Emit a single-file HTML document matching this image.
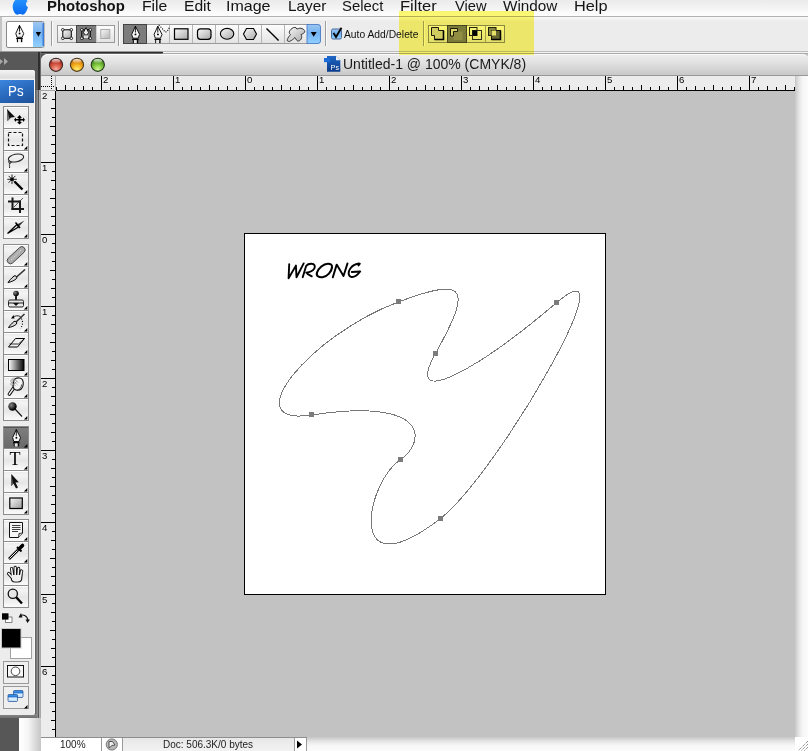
<!DOCTYPE html>
<html><head><meta charset="utf-8"><style>
*{margin:0;padding:0;box-sizing:border-box}
html,body{width:808px;height:751px;overflow:hidden;background:#575757;font-family:"Liberation Sans",sans-serif}
body{position:relative}
.a{position:absolute}
svg{position:absolute;overflow:visible}
.mi{position:absolute;top:-1px;font-size:14.5px;color:#141414;white-space:nowrap;line-height:14px;transform-origin:0 0}
.sep{position:absolute;width:1px;background:#a4a4a4;border-right:1px solid #fafafa;width:2px}
.grp{position:absolute;border:1px solid #9d9d9d;background:#f2f2f2;display:flex}
.b{position:relative;height:100%;border-right:1px solid #b4b4b4;background:linear-gradient(#fdfdfd,#ececec 60%,#e4e4e4)}
.b:last-child{border-right:none}
.b.on{background:linear-gradient(#7a7a7a,#6c6c6c);}
.rn{position:absolute;font-size:9.6px;line-height:9px;color:#000}
.tb{position:absolute;left:3px;width:26px;height:23px;border:1px solid #9b9b9b;background:linear-gradient(#fafafa,#ececec 55%,#e6e6e6)}
.tb.on{background:linear-gradient(#7c7c7c,#6e6e6e)}
.tri{position:absolute;right:1px;bottom:1px;width:0;height:0;border-left:4px solid transparent;border-bottom:4px solid #000}

</style></head><body>
<div class="a" style="left:0;top:0;width:808px;height:16px;background:linear-gradient(#ebebeb,#f2f2f2 45%,#fbfbfb 80%,#fdfdfd)"></div>
<div class="a" style="left:0;top:16px;width:808px;height:1px;background:#b2b2b2"></div>
<svg style="left:12px;top:0" width="17" height="16" viewBox="0 0 17 16"><defs><linearGradient id="ap" x1="0" y1="0" x2="0" y2="1"><stop offset="0" stop-color="#2394ff"/><stop offset="1" stop-color="#0a6af0"/></linearGradient></defs><path d="M8.2,0.2 C9.5,-0.6 11,-1.2 12.6,-0.9 C14.2,-0.6 15,0.3 15.6,1.3 C13.3,2.6 13.6,6.2 15.9,7 C15.5,8.8 14.8,10.8 13.6,12.5 C12.6,13.9 11.8,14.8 10.6,14.7 C9.6,14.6 9.1,14 8,14 C6.9,14 6.3,14.6 5.4,14.7 C4.2,14.8 3.3,13.7 2.4,12.4 C0.7,9.8 0.4,6.6 1,4.2 C1.7,1.4 3.6,-0.8 5.6,-0.9 C6.7,-0.9 7.4,-0.3 8.2,0.2 Z" fill="url(#ap)"/></svg>
<div class="mi" style="left:47px;font-weight:bold;transform:scaleX(1.027)">Photoshop</div>
<div class="mi" style="left:142px;transform:scaleX(1.086)">File</div>
<div class="mi" style="left:184px;transform:scaleX(1.078)">Edit</div>
<div class="mi" style="left:226px;transform:scaleX(1.105)">Image</div>
<div class="mi" style="left:288px;transform:scaleX(1.056)">Layer</div>
<div class="mi" style="left:342px;transform:scaleX(1.026)">Select</div>
<div class="mi" style="left:400px;transform:scaleX(1.143)">Filter</div>
<div class="mi" style="left:455px;transform:scaleX(1.013)">View</div>
<div class="mi" style="left:503px;transform:scaleX(1.054)">Window</div>
<div class="mi" style="left:574px;transform:scaleX(1.126)">Help</div>
<div class="a" style="left:0;top:17px;width:808px;height:35px;background:linear-gradient(#fafafa,#ececec 12%,#ececec)"></div>
<div class="a" style="left:0;top:17px;width:2px;height:35px;background:#c4c4c4"></div>
<div class="a" style="left:162px;top:51px;width:646px;height:3px;background:linear-gradient(#bdbdbd 0,#bdbdbd 33%,#f4f4f4 33%,#f4f4f4 66%,#a9a9a9 66%)"></div>
<div class="a" style="left:0;top:51px;width:163px;height:3px;background:linear-gradient(#9a9a9a 0,#9a9a9a 33%,#2c2c2c 33%,#2c2c2c 66%,#686868 66%);border-radius:0 2px 2px 0"></div>
<svg style="left:0;top:0" width="808" height="60">
<defs>
<linearGradient id="bl" x1="0" y1="0" x2="0" y2="1"><stop offset="0" stop-color="#9cc6f0"/><stop offset="0.45" stop-color="#74b2f2"/><stop offset="1" stop-color="#8fd0ff"/></linearGradient>
<linearGradient id="bt" x1="0" y1="0" x2="0" y2="1"><stop offset="0" stop-color="#fdfdfd"/><stop offset="0.6" stop-color="#ededed"/><stop offset="1" stop-color="#e2e2e2"/></linearGradient>
<linearGradient id="sq" x1="0" y1="0" x2="1" y2="1"><stop offset="0" stop-color="#fafafa"/><stop offset="1" stop-color="#a8a8a8"/></linearGradient>
<g id="pen"><path d="M0,0 L-3.7,8.2 L-2.5,12 H2.7 L4.2,8.2 Z" fill="#f6f6f6" stroke="#000" stroke-width="0.9" stroke-linejoin="miter"/><path d="M0,0 V6.3" stroke="#000" stroke-width="0.9"/><circle cx="0.1" cy="8.2" r="0.95" fill="#000"/><rect x="-3.3" y="12.6" width="6.6" height="1.3" fill="#000"/><rect x="-2.6" y="13.9" width="1.1" height="3" fill="#000"/><rect x="1.3" y="13.9" width="1.5" height="3" fill="#000"/><rect x="-1.5" y="13.9" width="2.8" height="3" fill="#e8e8e8"/></g>
</defs>
<!-- preset picker -->
<rect x="6.5" y="21.5" width="37.5" height="26" rx="1.5" fill="#fff" stroke="#8a8a8a"/>
<path d="M33,22 H41.5 Q44,22 44,24.5 V44.5 Q44,47 41.5,47 H33 Z" fill="url(#bl)"/>
<path d="M43.2,23 V46" stroke="#2a6ad0" stroke-width="1.2"/>
<path d="M35.8,32 H41 L38.4,36.8 Z" fill="#000"/>
<use href="#pen" x="19.5" y="25.3"/>
<!-- separators -->
<g shape-rendering="crispEdges">
<rect x="51" y="21" width="1" height="25" fill="#9d9d9d"/><rect x="52" y="21" width="1" height="25" fill="#fbfbfb"/>
<rect x="118" y="21" width="1" height="25" fill="#9d9d9d"/><rect x="119" y="21" width="1" height="25" fill="#fbfbfb"/>
<rect x="325" y="21" width="1" height="25" fill="#9d9d9d"/><rect x="326" y="21" width="1" height="25" fill="#fbfbfb"/>
<rect x="423" y="21" width="1" height="25" fill="#9d9d9d"/><rect x="424" y="21" width="1" height="25" fill="#fbfbfb"/>
</g>
<!-- group1 -->
<rect x="57.5" y="25.5" width="57" height="17" fill="url(#bt)" stroke="#9a9a9a"/>
<rect x="76.5" y="25.5" width="19" height="17" fill="#7c7c7c" stroke="#444"/>
<path d="M96,26 V42" stroke="#b0b0b0"/>
<rect x="62.8" y="29.8" width="8.5" height="8.5" fill="url(#sq)" stroke="#000" stroke-width="1"/>
<g fill="#fff" stroke="#000" stroke-width="0.8"><circle cx="62.8" cy="29.8" r="1.3"/><circle cx="71.3" cy="29.8" r="1.3"/><circle cx="62.8" cy="38.3" r="1.3"/><circle cx="71.3" cy="38.3" r="1.3"/></g>
<rect x="81.8" y="29.8" width="8.5" height="8.5" fill="none" stroke="#000" stroke-width="1"/>
<path d="M86,27.5 L83.5,32.5 L85,35 H87 L88.5,32.5 Z" fill="#eee" stroke="#000" stroke-width="0.8"/>
<rect x="84" y="35.5" width="4" height="3" fill="#ddd"/>
<g fill="#fff" stroke="#000" stroke-width="0.8"><circle cx="81.8" cy="29.8" r="1.3"/><circle cx="90.3" cy="29.8" r="1.3"/><circle cx="81.8" cy="38.3" r="1.3"/><circle cx="90.3" cy="38.3" r="1.3"/></g>
<rect x="100.8" y="29.5" width="9" height="9" fill="url(#sq)" stroke="#9a9a9a" stroke-width="1" opacity="0.8"/>
<!-- group2 -->
<rect x="123.5" y="24.5" width="184" height="19" fill="url(#bt)" stroke="#9a9a9a"/>
<rect x="123.5" y="24.5" width="23" height="19" fill="#7c7c7c" stroke="#444"/>
<g stroke="#b4b4b4" shape-rendering="crispEdges"><path d="M169.5,25 V43 M192.5,25 V43 M215.5,25 V43 M238.5,25 V43 M261.5,25 V43 M284.5,25 V43"/></g>
<use href="#pen" x="135.4" y="26.2"/>
<use href="#pen" x="157.8" y="26.2"/>
<g fill="#000"><rect x="158.6" y="24.8" width="1.1" height="1.1"/><rect x="160.4" y="26.6" width="1.1" height="1.1"/><rect x="162.0" y="28.4" width="1.1" height="1.1"/><rect x="163.6" y="30.2" width="1.1" height="1.1"/><rect x="165.4" y="31.3" width="1.1" height="1.1"/><rect x="167.2" y="29.8" width="1.1" height="1.1"/><rect x="168.4" y="27.8" width="1.1" height="1.1"/></g>
<rect x="174.5" y="28.8" width="13.5" height="10.5" fill="url(#sq)" stroke="#000" stroke-width="1.2"/>
<rect x="197.5" y="28.8" width="13.5" height="10.5" rx="3" fill="url(#sq)" stroke="#000" stroke-width="1.2"/>
<ellipse cx="227.1" cy="33.8" rx="6.7" ry="5.4" fill="url(#sq)" stroke="#000" stroke-width="1.1"/>
<path d="M246.5,28.5 H253.5 L256.5,34 L253.5,39.5 H246.5 L243.5,34 Z" fill="url(#sq)" stroke="#000" stroke-width="1.1"/>
<path d="M266.5,28.5 L278.6,40.5" stroke="#000" stroke-width="1.4"/>
<path d="M292,28.5 C293.5,26.8 296.5,27 297,29.2 C299,27.5 303,28 304.5,30.5 C305.5,32.5 303,34 301,34.5 C302.5,36.5 301.5,40.5 298.5,41 C296.5,41.3 296,39 295,37.5 C293,39.5 289.5,42.5 287.5,41 C286.5,39.5 289,36.5 290.5,34.5 C288.5,33.5 289,30.5 292,28.5 Z" fill="url(#sq)" stroke="#333" stroke-width="1"/>
<path d="M307,24.5 H318 Q320.5,24.5 320.5,27 V41 Q320.5,43.5 318,43.5 H307 Z" fill="url(#bl)" stroke="#3a70c0" stroke-width="0.8"/>
<path d="M310.8,32 H316.6 L313.7,36.8 Z" fill="#000"/>
<!-- checkbox -->
<rect x="331.5" y="29" width="10" height="10" rx="1.5" fill="url(#bl)" stroke="#4a6c9c"/>
<path d="M333.5,33 L336,37 L341.5,27.8" fill="none" stroke="#000" stroke-width="1.8"/>
<!-- group3 -->
<rect x="428.5" y="25.5" width="76" height="17" fill="url(#bt)" stroke="#8a8a8a"/>
<rect x="447.5" y="25.5" width="19" height="17" fill="#7c7c7c" stroke="#444"/>
<path d="M485.5,26 V42" stroke="#a0a0a0"/>
<path d="M431.5,27.5 H438.5 V30.5 H443.5 V39.5 H434.5 V35.5 H431.5 Z" fill="#d0d0d0" stroke="#1a1a1a" stroke-width="1"/>
<path d="M434.5,39.5 H443.5 V30.5" fill="none" stroke="#000" stroke-width="1.6"/>
<rect x="453.5" y="31.5" width="9" height="8.5" fill="#909090"/>
<path d="M450.5,28.5 H457.5 V31.5 H453.5 V36 H450.5 Z" fill="#dcdcdc" stroke="#1a1a1a" stroke-width="1"/>
<rect x="469.5" y="27.5" width="7.5" height="8" fill="none" stroke="#222"/>
<rect x="472.5" y="30.5" width="9" height="9" fill="none" stroke="#333"/>
<rect x="472.5" y="30.5" width="4.5" height="5" fill="#000"/>
<rect x="488.5" y="27.5" width="7.5" height="8" fill="#8a8a8a" stroke="#222"/>
<rect x="491.5" y="30.5" width="9" height="9" fill="#666" stroke="#111"/>
<rect x="491.5" y="30.5" width="4.5" height="5" fill="#e6e6e6"/>
<path d="M491.5,39.5 H500.5 V30.5" fill="none" stroke="#000" stroke-width="1.5"/>
</svg>
<div class="a" style="left:344px;top:30px;font-size:10px;line-height:10px;color:#111;white-space:nowrap;transform:scaleX(1.03);transform-origin:0 0">Auto Add/Delete</div>
<div class="a" style="left:700px;top:54px;width:108px;height:10px;background:#c8c8c8"></div>
<div class="a" style="left:41px;top:54px;width:768px;height:697px;background:#c2c2c2;border-radius:7px 7px 0 0"></div>
<div class="a" style="left:41px;top:54px;width:768px;height:22px;border-radius:7px 7px 0 0;background:linear-gradient(#eeeeee,#e2e2e2 40%,#c8c8c8);border-bottom:1px solid #999;box-shadow:inset 0 1px 0 #fafafa"></div>
<div class="a" style="left:795px;top:76px;width:13px;height:661px;background:linear-gradient(90deg,#c6c6c6,#e4e4e4 30%,#f6f6f6 60%,#fbfbfb)"></div>
<div class="a" style="left:306px;top:737px;width:489px;height:14px;background:linear-gradient(#c6c6c6,#e4e4e4 30%,#f6f6f6 60%,#fbfbfb)"></div>
<div class="a" style="left:795px;top:737px;width:13px;height:14px;background:#fff"></div>
<div class="a" style="left:0;top:718px;width:41px;height:33px;background:linear-gradient(90deg,#575757 0,#575757 19px,#fff 19px,#f6f6f6 28px,#c8c8c8 40px)"></div>
<svg style="left:0;top:0" width="808" height="80">
<defs>
<radialGradient id="gr" cx="50%" cy="85%" r="75%"><stop offset="0" stop-color="#f8b0a0"/><stop offset="0.5" stop-color="#d85a48"/><stop offset="1" stop-color="#a02010"/></radialGradient>
<radialGradient id="go" cx="50%" cy="85%" r="75%"><stop offset="0" stop-color="#fff070"/><stop offset="0.5" stop-color="#f4b020"/><stop offset="1" stop-color="#c86a00"/></radialGradient>
<radialGradient id="gg" cx="50%" cy="85%" r="75%"><stop offset="0" stop-color="#d0f890"/><stop offset="0.5" stop-color="#80c840"/><stop offset="1" stop-color="#3a8010"/></radialGradient>
<linearGradient id="gl" x1="0" y1="0" x2="0" y2="1"><stop offset="0" stop-color="#fff" stop-opacity="0.85"/><stop offset="1" stop-color="#fff" stop-opacity="0"/></linearGradient>
</defs>
<circle cx="56" cy="64.8" r="6.6" fill="url(#gr)" stroke="#3a2a28" stroke-width="1.1"/>
<circle cx="77" cy="64.8" r="6.6" fill="url(#go)" stroke="#4a3a20" stroke-width="1.1"/>
<circle cx="97.8" cy="64.8" r="6.6" fill="url(#gg)" stroke="#263a20" stroke-width="1.1"/>
<ellipse cx="56" cy="61.3" rx="4.2" ry="2.2" fill="url(#gl)"/>
<ellipse cx="77" cy="61.3" rx="4.2" ry="2.2" fill="url(#gl)"/>
<ellipse cx="97.8" cy="61.3" rx="4.2" ry="2.2" fill="url(#gl)"/>
<!-- ps doc icon -->
<defs><linearGradient id="psg" x1="0" y1="0" x2="0" y2="1"><stop offset="0" stop-color="#1f66c4"/><stop offset="1" stop-color="#0a3a88"/></linearGradient></defs>
<path d="M327,56 H336 L340.3,60.3 V71.8 H327 Z" fill="url(#psg)"/>
<rect x="324" y="58" width="6" height="4.2" fill="#1a6ad8"/>
<path d="M336,56 L340.3,60.3 H336 Z" fill="#eef2f8"/>
<text x="330.6" y="69.6" font-size="7.2" font-family="Liberation Sans" fill="#fff">Ps</text>
</svg>
<div class="a" style="left:343px;top:57px;font-size:14px;line-height:14px;color:#1a1a1a;white-space:nowrap">Untitled-1 @ 100% (CMYK/8)</div>
<div class="a" style="left:41px;top:76px;width:754px;height:15px;background:#ececec"></div>
<div class="a" style="left:41px;top:91px;width:15px;height:646px;background:#ececec"></div>
<svg style="left:0;top:0" width="808" height="751" shape-rendering="crispEdges">
<rect x="56" y="90" width="739" height="1" fill="#000"/>
<rect x="55" y="91" width="1" height="646" fill="#000"/>
<rect x="56" y="87" width="1" height="3" fill="#000"/>
<rect x="65" y="85" width="1" height="5" fill="#000"/>
<rect x="74" y="87" width="1" height="3" fill="#000"/>
<rect x="83" y="86" width="1" height="4" fill="#000"/>
<rect x="92" y="87" width="1" height="3" fill="#000"/>
<rect x="101" y="76" width="1" height="14" fill="#000"/>
<rect x="110" y="87" width="1" height="3" fill="#000"/>
<rect x="119" y="86" width="1" height="4" fill="#000"/>
<rect x="128" y="87" width="1" height="3" fill="#000"/>
<rect x="137" y="85" width="1" height="5" fill="#000"/>
<rect x="146" y="87" width="1" height="3" fill="#000"/>
<rect x="155" y="86" width="1" height="4" fill="#000"/>
<rect x="164" y="87" width="1" height="3" fill="#000"/>
<rect x="173" y="76" width="1" height="14" fill="#000"/>
<rect x="182" y="87" width="1" height="3" fill="#000"/>
<rect x="191" y="86" width="1" height="4" fill="#000"/>
<rect x="200" y="87" width="1" height="3" fill="#000"/>
<rect x="209" y="85" width="1" height="5" fill="#000"/>
<rect x="218" y="87" width="1" height="3" fill="#000"/>
<rect x="227" y="86" width="1" height="4" fill="#000"/>
<rect x="236" y="87" width="1" height="3" fill="#000"/>
<rect x="245" y="76" width="1" height="14" fill="#000"/>
<rect x="254" y="87" width="1" height="3" fill="#000"/>
<rect x="263" y="86" width="1" height="4" fill="#000"/>
<rect x="272" y="87" width="1" height="3" fill="#000"/>
<rect x="281" y="85" width="1" height="5" fill="#000"/>
<rect x="290" y="87" width="1" height="3" fill="#000"/>
<rect x="299" y="86" width="1" height="4" fill="#000"/>
<rect x="308" y="87" width="1" height="3" fill="#000"/>
<rect x="317" y="76" width="1" height="14" fill="#000"/>
<rect x="326" y="87" width="1" height="3" fill="#000"/>
<rect x="335" y="86" width="1" height="4" fill="#000"/>
<rect x="344" y="87" width="1" height="3" fill="#000"/>
<rect x="353" y="85" width="1" height="5" fill="#000"/>
<rect x="362" y="87" width="1" height="3" fill="#000"/>
<rect x="371" y="86" width="1" height="4" fill="#000"/>
<rect x="380" y="87" width="1" height="3" fill="#000"/>
<rect x="389" y="76" width="1" height="14" fill="#000"/>
<rect x="398" y="87" width="1" height="3" fill="#000"/>
<rect x="407" y="86" width="1" height="4" fill="#000"/>
<rect x="416" y="87" width="1" height="3" fill="#000"/>
<rect x="425" y="85" width="1" height="5" fill="#000"/>
<rect x="434" y="87" width="1" height="3" fill="#000"/>
<rect x="443" y="86" width="1" height="4" fill="#000"/>
<rect x="452" y="87" width="1" height="3" fill="#000"/>
<rect x="461" y="76" width="1" height="14" fill="#000"/>
<rect x="470" y="87" width="1" height="3" fill="#000"/>
<rect x="479" y="86" width="1" height="4" fill="#000"/>
<rect x="488" y="87" width="1" height="3" fill="#000"/>
<rect x="497" y="85" width="1" height="5" fill="#000"/>
<rect x="506" y="87" width="1" height="3" fill="#000"/>
<rect x="515" y="86" width="1" height="4" fill="#000"/>
<rect x="524" y="87" width="1" height="3" fill="#000"/>
<rect x="533" y="76" width="1" height="14" fill="#000"/>
<rect x="542" y="87" width="1" height="3" fill="#000"/>
<rect x="551" y="86" width="1" height="4" fill="#000"/>
<rect x="560" y="87" width="1" height="3" fill="#000"/>
<rect x="569" y="85" width="1" height="5" fill="#000"/>
<rect x="578" y="87" width="1" height="3" fill="#000"/>
<rect x="587" y="86" width="1" height="4" fill="#000"/>
<rect x="596" y="87" width="1" height="3" fill="#000"/>
<rect x="605" y="76" width="1" height="14" fill="#000"/>
<rect x="614" y="87" width="1" height="3" fill="#000"/>
<rect x="623" y="86" width="1" height="4" fill="#000"/>
<rect x="632" y="87" width="1" height="3" fill="#000"/>
<rect x="641" y="85" width="1" height="5" fill="#000"/>
<rect x="650" y="87" width="1" height="3" fill="#000"/>
<rect x="659" y="86" width="1" height="4" fill="#000"/>
<rect x="668" y="87" width="1" height="3" fill="#000"/>
<rect x="677" y="76" width="1" height="14" fill="#000"/>
<rect x="686" y="87" width="1" height="3" fill="#000"/>
<rect x="695" y="86" width="1" height="4" fill="#000"/>
<rect x="704" y="87" width="1" height="3" fill="#000"/>
<rect x="713" y="85" width="1" height="5" fill="#000"/>
<rect x="722" y="87" width="1" height="3" fill="#000"/>
<rect x="731" y="86" width="1" height="4" fill="#000"/>
<rect x="740" y="87" width="1" height="3" fill="#000"/>
<rect x="749" y="76" width="1" height="14" fill="#000"/>
<rect x="758" y="87" width="1" height="3" fill="#000"/>
<rect x="767" y="86" width="1" height="4" fill="#000"/>
<rect x="776" y="87" width="1" height="3" fill="#000"/>
<rect x="785" y="85" width="1" height="5" fill="#000"/>
<rect x="794" y="87" width="1" height="3" fill="#000"/>
<rect x="52" y="99" width="3" height="1" fill="#000"/>
<rect x="51" y="108" width="4" height="1" fill="#000"/>
<rect x="52" y="117" width="3" height="1" fill="#000"/>
<rect x="50" y="126" width="5" height="1" fill="#000"/>
<rect x="52" y="135" width="3" height="1" fill="#000"/>
<rect x="51" y="144" width="4" height="1" fill="#000"/>
<rect x="52" y="153" width="3" height="1" fill="#000"/>
<rect x="41" y="162" width="14" height="1" fill="#000"/>
<rect x="52" y="171" width="3" height="1" fill="#000"/>
<rect x="51" y="180" width="4" height="1" fill="#000"/>
<rect x="52" y="189" width="3" height="1" fill="#000"/>
<rect x="50" y="198" width="5" height="1" fill="#000"/>
<rect x="52" y="207" width="3" height="1" fill="#000"/>
<rect x="51" y="216" width="4" height="1" fill="#000"/>
<rect x="52" y="225" width="3" height="1" fill="#000"/>
<rect x="41" y="234" width="14" height="1" fill="#000"/>
<rect x="52" y="243" width="3" height="1" fill="#000"/>
<rect x="51" y="252" width="4" height="1" fill="#000"/>
<rect x="52" y="261" width="3" height="1" fill="#000"/>
<rect x="50" y="270" width="5" height="1" fill="#000"/>
<rect x="52" y="279" width="3" height="1" fill="#000"/>
<rect x="51" y="288" width="4" height="1" fill="#000"/>
<rect x="52" y="297" width="3" height="1" fill="#000"/>
<rect x="41" y="306" width="14" height="1" fill="#000"/>
<rect x="52" y="315" width="3" height="1" fill="#000"/>
<rect x="51" y="324" width="4" height="1" fill="#000"/>
<rect x="52" y="333" width="3" height="1" fill="#000"/>
<rect x="50" y="342" width="5" height="1" fill="#000"/>
<rect x="52" y="351" width="3" height="1" fill="#000"/>
<rect x="51" y="360" width="4" height="1" fill="#000"/>
<rect x="52" y="369" width="3" height="1" fill="#000"/>
<rect x="41" y="378" width="14" height="1" fill="#000"/>
<rect x="52" y="387" width="3" height="1" fill="#000"/>
<rect x="51" y="396" width="4" height="1" fill="#000"/>
<rect x="52" y="405" width="3" height="1" fill="#000"/>
<rect x="50" y="414" width="5" height="1" fill="#000"/>
<rect x="52" y="423" width="3" height="1" fill="#000"/>
<rect x="51" y="432" width="4" height="1" fill="#000"/>
<rect x="52" y="441" width="3" height="1" fill="#000"/>
<rect x="41" y="450" width="14" height="1" fill="#000"/>
<rect x="52" y="459" width="3" height="1" fill="#000"/>
<rect x="51" y="468" width="4" height="1" fill="#000"/>
<rect x="52" y="477" width="3" height="1" fill="#000"/>
<rect x="50" y="486" width="5" height="1" fill="#000"/>
<rect x="52" y="495" width="3" height="1" fill="#000"/>
<rect x="51" y="504" width="4" height="1" fill="#000"/>
<rect x="52" y="513" width="3" height="1" fill="#000"/>
<rect x="41" y="522" width="14" height="1" fill="#000"/>
<rect x="52" y="531" width="3" height="1" fill="#000"/>
<rect x="51" y="540" width="4" height="1" fill="#000"/>
<rect x="52" y="549" width="3" height="1" fill="#000"/>
<rect x="50" y="558" width="5" height="1" fill="#000"/>
<rect x="52" y="567" width="3" height="1" fill="#000"/>
<rect x="51" y="576" width="4" height="1" fill="#000"/>
<rect x="52" y="585" width="3" height="1" fill="#000"/>
<rect x="41" y="594" width="14" height="1" fill="#000"/>
<rect x="52" y="603" width="3" height="1" fill="#000"/>
<rect x="51" y="612" width="4" height="1" fill="#000"/>
<rect x="52" y="621" width="3" height="1" fill="#000"/>
<rect x="50" y="630" width="5" height="1" fill="#000"/>
<rect x="52" y="639" width="3" height="1" fill="#000"/>
<rect x="51" y="648" width="4" height="1" fill="#000"/>
<rect x="52" y="657" width="3" height="1" fill="#000"/>
<rect x="41" y="666" width="14" height="1" fill="#000"/>
<rect x="52" y="675" width="3" height="1" fill="#000"/>
<rect x="51" y="684" width="4" height="1" fill="#000"/>
<rect x="52" y="693" width="3" height="1" fill="#000"/>
<rect x="50" y="702" width="5" height="1" fill="#000"/>
<rect x="52" y="711" width="3" height="1" fill="#000"/>
<rect x="51" y="720" width="4" height="1" fill="#000"/>
<rect x="52" y="729" width="3" height="1" fill="#000"/>
<rect x="41" y="90" width="14" height="1" fill="#a4a4a4"/>














<rect x="55" y="76" width="1" height="14" fill="#ababab"/><rect x="51" y="76" width="1" height="1" fill="#000"/><rect x="51" y="78" width="1" height="1" fill="#000"/><rect x="51" y="80" width="1" height="1" fill="#000"/><rect x="51" y="82" width="1" height="1" fill="#000"/><rect x="51" y="84" width="1" height="1" fill="#000"/><rect x="51" y="86" width="1" height="1" fill="#000"/><rect x="51" y="88" width="1" height="1" fill="#000"/><rect x="41" y="86" width="1" height="1" fill="#000"/><rect x="43" y="86" width="1" height="1" fill="#000"/><rect x="45" y="86" width="1" height="1" fill="#000"/><rect x="47" y="86" width="1" height="1" fill="#000"/><rect x="49" y="86" width="1" height="1" fill="#000"/><rect x="51" y="86" width="1" height="1" fill="#000"/><rect x="53" y="86" width="1" height="1" fill="#000"/>
</svg>
<div class="rn" style="left:103px;top:75px">2</div>
<div class="rn" style="left:175px;top:75px">1</div>
<div class="rn" style="left:247px;top:75px">0</div>
<div class="rn" style="left:319px;top:75px">1</div>
<div class="rn" style="left:391px;top:75px">2</div>
<div class="rn" style="left:463px;top:75px">3</div>
<div class="rn" style="left:535px;top:75px">4</div>
<div class="rn" style="left:607px;top:75px">5</div>
<div class="rn" style="left:679px;top:75px">6</div>
<div class="rn" style="left:751px;top:75px">7</div>
<div class="rn" style="left:42px;top:90.5px">2</div>
<div class="rn" style="left:42px;top:162.5px">1</div>
<div class="rn" style="left:42px;top:234.5px">0</div>
<div class="rn" style="left:42px;top:306.5px">1</div>
<div class="rn" style="left:42px;top:378.5px">2</div>
<div class="rn" style="left:42px;top:450.5px">3</div>
<div class="rn" style="left:42px;top:522.5px">4</div>
<div class="rn" style="left:42px;top:594.5px">5</div>
<div class="rn" style="left:42px;top:666.5px">6</div>
<div class="a" style="left:244px;top:233px;width:362px;height:362px;background:#fff;border:1px solid #000"></div>
<svg style="left:0;top:0" width="808" height="751">
<g fill="none" stroke="#000" stroke-linecap="round" stroke-linejoin="round">
<path d="M289.2,264.3 L288.6,278.3 L295.9,265.6 L296.5,277.2 L303.7,263.4" stroke-width="1.9"/>
<path d="M302.7,277.2 L306.2,265.8 C307.5,264.2 309.5,263.6 311.5,263.7 C314.5,263.9 315.6,265.8 314.3,268.5 C312.8,271 309.5,272.3 306.3,272.6 M307.4,273.8 L311.8,276.3" stroke-width="1.9"/>
<path d="M327.8,263.7 C323.5,263.8 318.5,268 317,272.5 C316,276 318.5,277.5 322.5,277.2 C327.5,276.7 331.5,271.5 332,267.5 C332.4,264.7 330.5,263.6 327.8,263.7 Z" stroke-width="2.1"/>
<path d="M332.8,277.4 L336.7,264.6 L343.5,276 L347.5,263.4" stroke-width="1.9"/>
<path d="M359.6,263.8 C356,263.8 352.5,265.5 350.3,268.5 C348.2,271.5 347.8,275.5 350.9,276.8 C353.5,277.6 357.5,275 360.2,271.5 L351.8,272 M358.3,263.4 L359.8,263.6 L358.5,265.5" stroke-width="1.9"/>
</g>
<path d="M398.3,301.5 C468.4,275.1 471.7,288.0 435.3,353.3 C402.4,412.3 480.9,366.7 556.3,302.4 C634.7,235.5 497.4,473.8 440.2,518.2 C344.7,592.2 365.7,482.6 400.4,459.1 C425.4,442.2 431.4,396.2 311.5,414.5 C234.7,426.2 308.9,335.2 398.3,301.5 Z" fill="none" stroke="#777" stroke-width="1" shape-rendering="crispEdges" transform="translate(0,0.5)"/>
<g fill="#7b7b7b" shape-rendering="crispEdges">
<rect x="396" y="299" width="5" height="5"/>
<rect x="433" y="351" width="5" height="5"/>
<rect x="554" y="300" width="5" height="5"/>
<rect x="438" y="516" width="5" height="5"/>
<rect x="398" y="457" width="5" height="5"/>
<rect x="309" y="412" width="5" height="5"/>
</g>
</svg>
<div class="a" style="left:41px;top:737px;width:266px;height:1px;background:#8e8e8e"></div>
<div class="a" style="left:41px;top:738px;width:60px;height:13px;background:#fff"></div>
<div class="a" style="left:101px;top:738px;width:1px;height:13px;background:#9a9a9a"></div>
<div class="a" style="left:102px;top:738px;width:20px;height:13px;background:#fff"></div>
<div class="a" style="left:122px;top:738px;width:1px;height:13px;background:#9a9a9a"></div>
<div class="a" style="left:123px;top:738px;width:171px;height:13px;background:linear-gradient(#e8e8e8,#f2f2f2)"></div>
<div class="a" style="left:294px;top:738px;width:1px;height:13px;background:#9a9a9a"></div>
<div class="a" style="left:295px;top:738px;width:11px;height:13px;background:#fff"></div>
<div class="a" style="left:306px;top:738px;width:1px;height:13px;background:#9a9a9a"></div>
<div class="a" style="left:60px;top:740px;font-size:10px;line-height:10px;color:#222;white-space:nowrap">100%</div>
<div class="a" style="left:163px;top:740px;font-size:10px;line-height:10px;color:#222;white-space:nowrap">Doc: 506.3K/0 bytes</div>
<svg style="left:0;top:730px" width="808" height="21">
<circle cx="111.8" cy="14.5" r="5.6" fill="#b8b8b8" stroke="#7a7a7a" stroke-width="1"/>
<path d="M109,18 V11.5 H112.5 L115,15 L112,15.5 Z" fill="#eee" stroke="#444" stroke-width="0.9"/>
<path d="M297,10.5 L302,14.5 L297,18.5 Z" fill="#000"/>
<path d="M808,738 L795,751" stroke="#555"/>
</svg>
<svg style="left:795px;top:737px" width="13" height="14"><path d="M13,7 L5,15 M13,10 L8,15 M13,4 L2,15" stroke="#666" stroke-width="1" stroke-dasharray="1,1"/></svg>
<div class="a" style="left:0;top:52px;width:38px;height:666px;background:#585858"></div>
<div class="a" style="left:38px;top:52px;width:2px;height:38px;background:#2e2e2e"></div>
<div class="a" style="left:40px;top:52px;width:1px;height:38px;background:#6a6a6a"></div>
<div class="a" style="left:35px;top:90px;width:6px;height:628px;background:linear-gradient(90deg,#666 0,#666 1px,#7a7a7a 1px,#7a7a7a 2px,#8e8e8e 2px,#8e8e8e 3px,#5a5a5a 3px,#5a5a5a 4px,#b0b0b0 4px,#b0b0b0 5px,#a8a8a8 5px)"></div>
<div class="a" style="left:0;top:714px;width:38px;height:4px;border-radius:0 0 4px 0;background:linear-gradient(#8a8a8a,#6e6e6e)"></div>
<div class="a" style="left:0;top:70px;width:35px;height:645px;border-radius:0 3px 3px 0;background:#ececec;box-shadow:inset -1px 0 0 #f8f8f8"></div>
<div class="a" style="left:0;top:70px;width:35px;height:10px;border-radius:0 3px 0 0;background:linear-gradient(#f4f4f4,#dcdcdc 80%,#f8f8f8)"></div>
<div class="a" style="left:0;top:80px;width:34px;height:23px;background:linear-gradient(160deg,#3d86de,#2a6cc0 45%,#1c4f98)"></div>
<div class="a" style="left:8px;top:83px;font-size:15.5px;line-height:16px;color:#fff;transform:scaleX(0.86);transform-origin:0 0">Ps</div>
<svg style="left:0;top:52px" width="12" height="18"><path d="M-1,6 L3,9.5 L-1,13 Z M4,6 L8,9.5 L4,13 Z" fill="#a8a8a8"/></svg>
<div class="a" style="left:3px;top:106px;width:26px;height:133px;border:1px solid #8c8c8c;background:#8c8c8c"></div>
<div class="a" style="left:4px;top:107px;width:24px;height:21px;background:linear-gradient(#e9e9e9,#f4f4f4 20%,#e6e6e6 55%,#fbfbfb);box-shadow:inset 0 1px 0 #fff"></div>
<div class="a" style="left:4px;top:129px;width:24px;height:21px;background:linear-gradient(#e9e9e9,#f4f4f4 20%,#e6e6e6 55%,#fbfbfb);box-shadow:inset 0 1px 0 #fff"></div>
<div class="a" style="left:4px;top:151px;width:24px;height:21px;background:linear-gradient(#e9e9e9,#f4f4f4 20%,#e6e6e6 55%,#fbfbfb);box-shadow:inset 0 1px 0 #fff"></div>
<div class="a" style="left:4px;top:173px;width:24px;height:21px;background:linear-gradient(#e9e9e9,#f4f4f4 20%,#e6e6e6 55%,#fbfbfb);box-shadow:inset 0 1px 0 #fff"></div>
<div class="a" style="left:4px;top:195px;width:24px;height:21px;background:linear-gradient(#e9e9e9,#f4f4f4 20%,#e6e6e6 55%,#fbfbfb);box-shadow:inset 0 1px 0 #fff"></div>
<div class="a" style="left:4px;top:217px;width:24px;height:21px;background:linear-gradient(#e9e9e9,#f4f4f4 20%,#e6e6e6 55%,#fbfbfb);box-shadow:inset 0 1px 0 #fff"></div>
<div class="a" style="left:3px;top:244px;width:26px;height:177px;border:1px solid #8c8c8c;background:#8c8c8c"></div>
<div class="a" style="left:4px;top:245px;width:24px;height:21px;background:linear-gradient(#e9e9e9,#f4f4f4 20%,#e6e6e6 55%,#fbfbfb);box-shadow:inset 0 1px 0 #fff"></div>
<div class="a" style="left:4px;top:267px;width:24px;height:21px;background:linear-gradient(#e9e9e9,#f4f4f4 20%,#e6e6e6 55%,#fbfbfb);box-shadow:inset 0 1px 0 #fff"></div>
<div class="a" style="left:4px;top:289px;width:24px;height:21px;background:linear-gradient(#e9e9e9,#f4f4f4 20%,#e6e6e6 55%,#fbfbfb);box-shadow:inset 0 1px 0 #fff"></div>
<div class="a" style="left:4px;top:311px;width:24px;height:21px;background:linear-gradient(#e9e9e9,#f4f4f4 20%,#e6e6e6 55%,#fbfbfb);box-shadow:inset 0 1px 0 #fff"></div>
<div class="a" style="left:4px;top:333px;width:24px;height:21px;background:linear-gradient(#e9e9e9,#f4f4f4 20%,#e6e6e6 55%,#fbfbfb);box-shadow:inset 0 1px 0 #fff"></div>
<div class="a" style="left:4px;top:355px;width:24px;height:21px;background:linear-gradient(#e9e9e9,#f4f4f4 20%,#e6e6e6 55%,#fbfbfb);box-shadow:inset 0 1px 0 #fff"></div>
<div class="a" style="left:4px;top:377px;width:24px;height:21px;background:linear-gradient(#e9e9e9,#f4f4f4 20%,#e6e6e6 55%,#fbfbfb);box-shadow:inset 0 1px 0 #fff"></div>
<div class="a" style="left:4px;top:399px;width:24px;height:21px;background:linear-gradient(#e9e9e9,#f4f4f4 20%,#e6e6e6 55%,#fbfbfb);box-shadow:inset 0 1px 0 #fff"></div>
<div class="a" style="left:3px;top:426px;width:26px;height:89px;border:1px solid #8c8c8c;background:#8c8c8c"></div>
<div class="a" style="left:4px;top:427px;width:24px;height:21px;background:linear-gradient(#7e7e7e,#6a6a6a);box-shadow:inset 0 1px 0 #555"></div>
<div class="a" style="left:4px;top:449px;width:24px;height:21px;background:linear-gradient(#e9e9e9,#f4f4f4 20%,#e6e6e6 55%,#fbfbfb);box-shadow:inset 0 1px 0 #fff"></div>
<div class="a" style="left:4px;top:471px;width:24px;height:21px;background:linear-gradient(#e9e9e9,#f4f4f4 20%,#e6e6e6 55%,#fbfbfb);box-shadow:inset 0 1px 0 #fff"></div>
<div class="a" style="left:4px;top:493px;width:24px;height:21px;background:linear-gradient(#e9e9e9,#f4f4f4 20%,#e6e6e6 55%,#fbfbfb);box-shadow:inset 0 1px 0 #fff"></div>
<div class="a" style="left:3px;top:519px;width:26px;height:89px;border:1px solid #8c8c8c;background:#8c8c8c"></div>
<div class="a" style="left:4px;top:520px;width:24px;height:21px;background:linear-gradient(#e9e9e9,#f4f4f4 20%,#e6e6e6 55%,#fbfbfb);box-shadow:inset 0 1px 0 #fff"></div>
<div class="a" style="left:4px;top:542px;width:24px;height:21px;background:linear-gradient(#e9e9e9,#f4f4f4 20%,#e6e6e6 55%,#fbfbfb);box-shadow:inset 0 1px 0 #fff"></div>
<div class="a" style="left:4px;top:564px;width:24px;height:21px;background:linear-gradient(#e9e9e9,#f4f4f4 20%,#e6e6e6 55%,#fbfbfb);box-shadow:inset 0 1px 0 #fff"></div>
<div class="a" style="left:4px;top:586px;width:24px;height:21px;background:linear-gradient(#e9e9e9,#f4f4f4 20%,#e6e6e6 55%,#fbfbfb);box-shadow:inset 0 1px 0 #fff"></div>
<svg style="left:0;top:0" width="40" height="751">
<defs>
<linearGradient id="tg1" x1="0" y1="0" x2="1" y2="1"><stop offset="0" stop-color="#fafafa"/><stop offset="1" stop-color="#9a9a9a"/></linearGradient>
<linearGradient id="tgh" x1="0" y1="0" x2="1" y2="0"><stop offset="0" stop-color="#fff"/><stop offset="1" stop-color="#000"/></linearGradient>
<radialGradient id="tball" cx="35%" cy="35%" r="60%"><stop offset="0" stop-color="#888"/><stop offset="1" stop-color="#000"/></radialGradient>
<linearGradient id="tblue" x1="0" y1="0" x2="0" y2="1"><stop offset="0" stop-color="#4aa0f0"/><stop offset="0.4" stop-color="#1e6ed0"/><stop offset="0.45" stop-color="#e8f4ff"/><stop offset="1" stop-color="#b8daf8"/></linearGradient>
<g id="tri"><path d="M0,0 L-3.5,3.5 H0 Z" fill="#000"/></g>
</defs>
<!-- move -->
<path d="M7,109 L15,117 L11,117.5 L7.5,121 Z" fill="#111"/><path d="M7,109 L7.5,121 L9.5,119" fill="#777"/>
<path d="M19.5,115 L22,118 H20.5 V119 H23 V117.5 L25,119.8 L23,122 V120.5 H20.5 V122 H22 L19.5,124.5 L17,122 H18.5 V120.5 H16 V122 L14,119.8 L16,117.5 V119 H18.5 V118 H17 Z" fill="#000"/>
<!-- marquee -->
<rect x="8.5" y="132.5" width="14" height="13" fill="none" stroke="#111" stroke-width="1.2" stroke-dasharray="3,2"/>
<use href="#tri" x="27.3" y="146"/>
<!-- lasso -->
<ellipse cx="16" cy="158" rx="7.8" ry="3.8" transform="rotate(-12 16 158)" fill="none" stroke="#222" stroke-width="1.1"/>
<path d="M9.5,160.5 C7.5,162 9.5,164 11,163 C12,162 10,161.5 9.5,163.5 C9,165 10,166 9.5,168" fill="none" stroke="#222" stroke-width="1"/>
<use href="#tri" x="27.3" y="168"/>
<!-- wand -->
<g stroke="#222" stroke-width="1"><path d="M12,174.5 V184 M7.3,179.3 H16.8 M8.6,175.9 L15.4,182.7 M15.4,175.9 L8.6,182.7"/></g>
<circle cx="12" cy="179.3" r="1.8" fill="#000"/>
<path d="M14.5,181.5 L22.5,189.5" stroke="#000" stroke-width="2.4"/>
<use href="#tri" x="27.3" y="190"/>
<!-- crop -->
<g fill="#1a1a1a"><rect x="11.5" y="197.5" width="2" height="12.5"/><rect x="8" y="200.5" width="12.5" height="2"/><rect x="19" y="200.5" width="2" height="12.5"/><rect x="11.5" y="208" width="12.5" height="2"/></g>
<path d="M13.5,207.5 L23,198" stroke="#333" stroke-width="0.8"/>
<!-- slice -->
<path d="M7.5,233.5 L17,224.5 L18.5,227 Z" fill="#f4f4f4" stroke="#000" stroke-width="1.2"/>
<path d="M17,224.5 L24.5,220.5 L18.5,227 Z" fill="#333"/>
<path d="M15.5,222.5 L20,228" stroke="#000" stroke-width="1.5"/>
<use href="#tri" x="27.3" y="234"/>
<!-- heal -->
<rect x="5" y="252" width="22" height="6.5" rx="3.2" transform="rotate(-43 16 255)" fill="#acacac" stroke="#444" stroke-width="0.9"/>
<g fill="#ddd"><circle cx="13" cy="258" r="0.6"/><circle cx="16" cy="255" r="0.6"/><circle cx="19" cy="252" r="0.6"/><circle cx="14.5" cy="256.5" r="0.6"/><circle cx="17.5" cy="253.5" r="0.6"/><circle cx="11.5" cy="259.5" r="0.6"/><circle cx="20.5" cy="250.5" r="0.6"/></g>
<use href="#tri" x="27.3" y="262"/>
<!-- brush -->
<path d="M16,277.5 L25,269.5" stroke="#333" stroke-width="1.6"/>
<path d="M8,282.5 C9,281 11,278.5 14,276 C15.5,275 17.5,277 16.5,278.5 C14.5,280.5 11,282 8,282.5 Z" fill="#d8d8d8" stroke="#000" stroke-width="1"/>
<use href="#tri" x="27.3" y="284"/>
<!-- stamp -->
<circle cx="16" cy="293.5" r="2.8" fill="url(#tball)"/>
<rect x="15" y="296" width="2" height="4" fill="#222"/>
<rect x="8.5" y="300" width="15" height="7" rx="1.5" fill="#e8e8e8" stroke="#222" stroke-width="1"/>
<path d="M8.5,303 H23.5" stroke="#222" stroke-width="1"/><path d="M13,303 L16,306 L19,303 Z" fill="#111"/>
<use href="#tri" x="27.3" y="306"/>
<!-- history brush -->
<path d="M15.5,322.5 L24.5,314" stroke="#333" stroke-width="1.6"/>
<path d="M8.5,327.5 C9.5,326 11.5,323.5 14,321.5 C15.5,320.5 17.5,322.5 16.5,324 C14.5,326 11.5,327 8.5,327.5 Z" fill="#d8d8d8" stroke="#000" stroke-width="1"/>
<path d="M12.5,317.5 C15,315.5 18,315.3 20.5,316.5" fill="none" stroke="#222" stroke-width="1"/><path d="M11,318.5 L13.5,315 L14.5,318.5 Z" fill="#000"/>
<path d="M21.5,318.5 C23,321.5 23,325 20.5,328.5" fill="none" stroke="#000" stroke-width="1.1" stroke-dasharray="1,1.6"/>
<use href="#tri" x="27.3" y="328"/>
<!-- eraser -->
<path d="M8.5,347 L15.5,338.5 H24.5 L17.5,347 Z" fill="#f0f0f0" stroke="#000" stroke-width="1"/>
<path d="M9.5,344 H18.5 L24.5,338.5" fill="none" stroke="#000" stroke-width="0.8"/>
<use href="#tri" x="27.3" y="350"/>
<!-- gradient -->
<rect x="8.5" y="359.5" width="15.5" height="11" fill="url(#tgh)" stroke="#000" stroke-width="1"/>
<use href="#tri" x="27.3" y="372"/>
<!-- smudge -->
<path d="M9.3,394.2 L14,387.5" stroke="#111" stroke-width="3.4" stroke-linecap="round"/>
<path d="M9.3,394.2 L14,387.5" stroke="#f4f4f4" stroke-width="1.4" stroke-linecap="round"/>
<path d="M13.5,381.5 C13.8,378.8 16.5,377.6 19.5,378 C22.2,378.4 23.6,381 23.2,384.8 C22.8,388.4 20.2,390.6 17,390.2 C15,390 13.2,388.5 13.2,386 Z" fill="#f2f2f2" stroke="#111" stroke-width="1.1"/>
<g stroke="#777" stroke-width="0.7"><path d="M10.5,381 L15.5,386 M10.5,384 L13.5,387 M12,379.5 L17,384.5 M14.5,379 L18,382.5 M10.5,381 L14,377.5 M10.5,384 L15,379.5 M12,386 L16.5,381.5"/></g>
<path d="M17,390.2 C19.8,389.6 21.5,387.5 21.6,384.5" fill="none" stroke="#333" stroke-width="0.9"/>
<use href="#tri" x="27.3" y="394"/>
<!-- dodge -->
<circle cx="12.5" cy="406.5" r="4.2" fill="url(#tball)"/>
<path d="M15,409 L22,416.5" stroke="#111" stroke-width="1.1"/>
<use href="#tri" x="27.3" y="416"/>
<!-- pen (pressed) -->
<use href="#pen" x="16.3" y="429.5"/>
<use href="#tri" x="27.3" y="444"/>
<!-- type -->
<text x="9.5" y="465" font-family="Liberation Serif" font-size="18" fill="#000">T</text>
<use href="#tri" x="27.3" y="466"/>
<!-- path select arrow -->
<path d="M11.3,474 V486 L13.5,483.5 L16,488.5 L18,487.5 L15.5,482.5 L18.8,482.3 Z" fill="#111"/>
<path d="M11.3,474 V486 L13,484" fill="#666"/>
<use href="#tri" x="27.3" y="488"/>
<!-- rect shape -->
<rect x="9.8" y="498" width="12.5" height="10.5" fill="url(#tg1)" stroke="#000" stroke-width="1.2"/>
<use href="#tri" x="27.3" y="510"/>
<!-- notes -->
<path d="M9.5,522.5 H22.5 V533 L18.5,537.5 H9.5 Z" fill="#f6f6f6" stroke="#111" stroke-width="1"/>
<path d="M18.5,537.5 L19,533.5 L22.5,533" fill="#ccc" stroke="#111" stroke-width="0.8"/>
<g stroke="#111" stroke-width="0.8"><path d="M12,525.5 H20.5 M12,527.5 H20.5 M12,529.5 H20.5 M12,531.5 H18"/></g>
<use href="#tri" x="27.3" y="537"/>
<!-- eyedropper -->
<path d="M9,559 L18,550" stroke="#000" stroke-width="2.6"/><path d="M9.5,558.5 L17.5,550.5" stroke="#f0f0f0" stroke-width="1"/>
<path d="M17,547 L21.5,551.5" stroke="#000" stroke-width="2"/>
<path d="M19,549 L22.5,545.5" stroke="#000" stroke-width="3.6" stroke-linecap="round"/>
<use href="#tri" x="27.3" y="559"/>
<!-- hand -->
<g stroke-linecap="round"><g stroke="#111" stroke-width="3.3"><path d="M12.6,578 L8.6,573.6 M12.6,576 L11.6,568.6 M15.3,576 L15.2,567.4 M18,576 L18.6,568.4 M20.4,577 L21.6,571"/></g>
<path d="M11.3,574.5 H21.8 V578 C21.8,580.5 20,582 17.5,582 H15 C13,582 11.3,580.5 11.3,578 Z" fill="#f4f4f4" stroke="#111" stroke-width="1.1"/>
<g stroke="#f4f4f4" stroke-width="1.5"><path d="M12.6,578 L8.6,573.6 M12.6,576 L11.6,568.6 M15.3,576 L15.2,567.4 M18,576 L18.6,568.4 M20.4,577 L21.6,571"/></g>
<path d="M12.2,575.5 H21 V578.5 C21,580.5 19.5,581.2 17.5,581.2 H15 C13.2,581.2 12.2,580.2 12.2,578.5 Z" fill="#f0f0f0"/></g>
<!-- zoom -->
<circle cx="12.8" cy="593.8" r="4.6" fill="#e8e8e8" stroke="#111" stroke-width="1.3"/>
<path d="M16.2,597.2 L22,603.5" stroke="#000" stroke-width="2.4"/>
<!-- colors -->
<rect x="5.5" y="617" width="6.5" height="5.5" fill="#fff" stroke="#333" stroke-width="0.6"/>
<rect x="2" y="613.3" width="6.5" height="6.3" fill="#000"/>
<path d="M20,615.5 C24,614 27,616 28,620" fill="none" stroke="#111" stroke-width="1.2"/>
<path d="M18.5,617.5 L21,613 L22.5,617.5 Z M25.5,619.5 L30,619.5 L27.5,623 Z" fill="#111"/>
<rect x="10.5" y="637.5" width="21" height="21" fill="#fff" stroke="#a0a0a0" stroke-width="1"/>
<rect x="1.5" y="628.5" width="19.5" height="19.5" fill="#000" stroke="#c8c8c8" stroke-width="1"/>
<!-- quick mask -->
<rect x="3.5" y="661.5" width="25" height="22" fill="#efefef" stroke="#9a9a9a" stroke-width="1"/>
<rect x="7.5" y="665.5" width="16" height="11.5" fill="#f8f8f8" stroke="#111" stroke-width="1"/>
<circle cx="15.5" cy="671.3" r="4.3" fill="#fff" stroke="#333" stroke-width="0.9"/>
<!-- screen mode -->
<rect x="3.5" y="686.5" width="25" height="22" fill="#efefef" stroke="#9a9a9a" stroke-width="1"/>
<rect x="13.5" y="690.5" width="9.5" height="7" rx="1" fill="url(#tblue)" stroke="#1a4a90" stroke-width="0.7"/>
<rect x="8" y="694.5" width="9.5" height="7" rx="1" fill="url(#tblue)" stroke="#1a4a90" stroke-width="0.7"/>
<use href="#tri" x="27.5" y="705"/>
</svg>
<div class="a" style="left:399px;top:11px;width:135px;height:44px;background:#fffa74;mix-blend-mode:multiply"></div>

</body></html>
